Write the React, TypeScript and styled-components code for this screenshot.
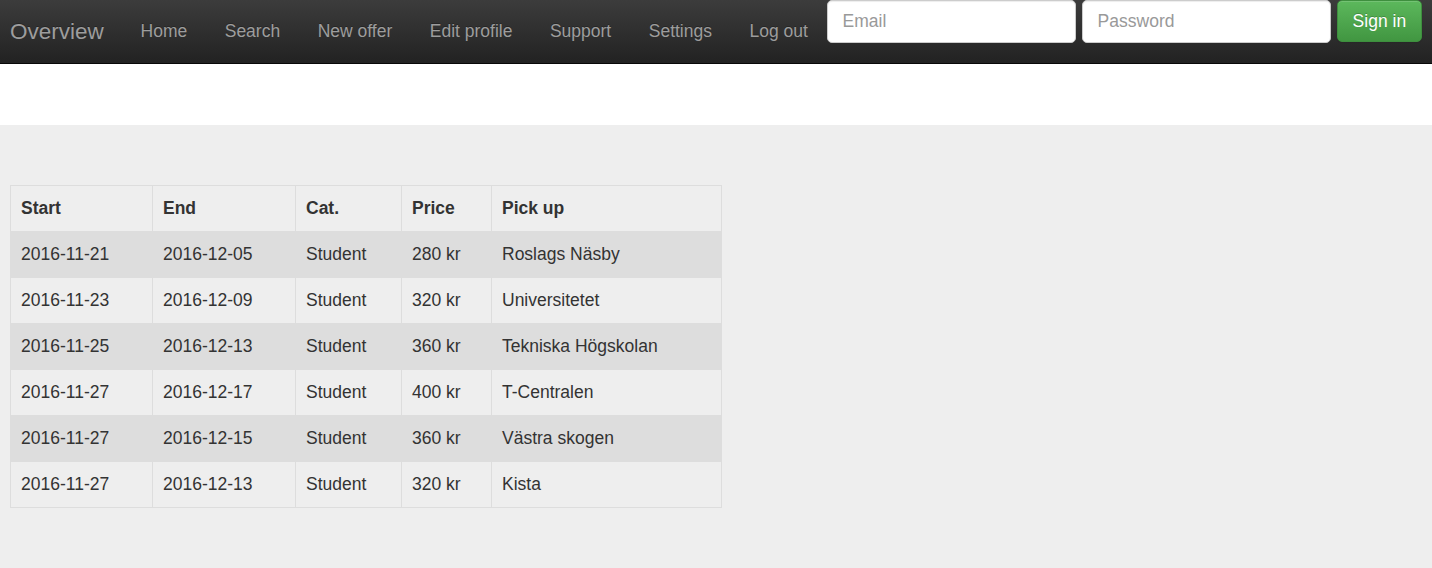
import React from 'react'
import styled, { createGlobalStyle } from 'styled-components'

const GlobalStyle = createGlobalStyle`
  * {
    box-sizing: border-box;
  }
  body {
    margin: 0;
    background: #fff;
    color: #333;
    font-family: 'Liberation Sans', Arial, Helvetica, sans-serif;
    font-size: 17.5px;
    line-height: 1.42857;
  }
`

const navItems = ['Home', 'Search', 'New offer', 'Edit profile', 'Support', 'Settings', 'Log out']

const rides = [
  { start: '2016-11-21', end: '2016-12-05', cat: 'Student', price: '280 kr', pickup: 'Roslags Näsby' },
  { start: '2016-11-23', end: '2016-12-09', cat: 'Student', price: '320 kr', pickup: 'Universitetet' },
  { start: '2016-11-25', end: '2016-12-13', cat: 'Student', price: '360 kr', pickup: 'Tekniska Högskolan' },
  { start: '2016-11-27', end: '2016-12-17', cat: 'Student', price: '400 kr', pickup: 'T-Centralen' },
  { start: '2016-11-27', end: '2016-12-15', cat: 'Student', price: '360 kr', pickup: 'Västra skogen' },
  { start: '2016-11-27', end: '2016-12-13', cat: 'Student', price: '320 kr', pickup: 'Kista' },
]

const columns = [
  { label: 'Start', width: 142 },
  { label: 'End', width: 143 },
  { label: 'Cat.', width: 106 },
  { label: 'Price', width: 90 },
  { label: 'Pick up', width: 230 },
]

const App: React.FC = () => {
  return (
    <>
      <GlobalStyle />
      <Navbar>
        <Brand href='#'>Overview</Brand>
        <NavList>
          {navItems.map((item) => (
            <NavLink key={item} href='#'>
              {item}
            </NavLink>
          ))}
        </NavList>
        <LoginForm onSubmit={(e) => e.preventDefault()}>
          <Input type='text' placeholder='Email' />
          <Input type='password' placeholder='Password' />
          <SignIn type='submit'>Sign in</SignIn>
        </LoginForm>
      </Navbar>
      <Spacer />
      <Jumbotron>
        <Table>
          <colgroup>
            {columns.map((c) => (
              <col key={c.label} style={{ width: c.width }} />
            ))}
          </colgroup>
          <thead>
            <tr>
              {columns.map((c) => (
                <Th key={c.label}>{c.label}</Th>
              ))}
            </tr>
          </thead>
          <tbody>
            {rides.map((r, i) => (
              <Row key={i} $striped={i % 2 === 0}>
                <Td>{r.start}</Td>
                <Td>{r.end}</Td>
                <Td>{r.cat}</Td>
                <Td>{r.price}</Td>
                <Td>{r.pickup}</Td>
              </Row>
            ))}
          </tbody>
        </Table>
      </Jumbotron>
    </>
  )
}

export default App

const Navbar = styled.nav`
  display: flex;
  align-items: flex-start;
  height: 64px;
  background: linear-gradient(to bottom, #3c3c3c 0, #222 100%);
  border-bottom: 1px solid #080808;
`

const Brand = styled.a`
  display: block;
  height: 63px;
  padding: 18.75px 18px 0 10px;
  font-size: 22.5px;
  line-height: 25px;
  color: #9d9d9d;
  text-decoration: none;
  text-shadow: 0 -1px 0 rgba(0, 0, 0, 0.25);
`

const NavList = styled.div`
  display: flex;
`

const NavLink = styled.a`
  display: block;
  padding: 18.75px 18.75px;
  line-height: 25px;
  color: #9d9d9d;
  text-decoration: none;
  text-shadow: 0 -1px 0 rgba(0, 0, 0, 0.25);
  white-space: nowrap;
`

const LoginForm = styled.form`
  display: flex;
  align-items: flex-start;
  gap: 6px;
  margin: 0;
`

const Input = styled.input`
  width: 249px;
  height: 43px;
  padding: 7.5px 15px;
  font-family: inherit;
  font-size: 17.5px;
  color: #555;
  background: #fff;
  border: 1px solid #ccc;
  border-radius: 5px;
  box-shadow: inset 0 1px 1px rgba(0, 0, 0, 0.075);
  outline: none;

  &::placeholder {
    color: #999;
  }
`

const SignIn = styled.button`
  height: 42px;
  padding: 7.5px 15px;
  font-family: inherit;
  font-size: 17.5px;
  line-height: 25px;
  color: #fff;
  background: linear-gradient(to bottom, #5cb85c 0, #419641 100%);
  border: 1px solid #3e8f3e;
  border-radius: 5px;
  text-shadow: 0 -1px 0 rgba(0, 0, 0, 0.2);
  box-shadow: inset 0 1px 0 rgba(255, 255, 255, 0.15), 0 1px 1px rgba(0, 0, 0, 0.075);
  cursor: pointer;
  white-space: nowrap;
`

const Spacer = styled.div`
  height: 61px;
`

const Jumbotron = styled.section`
  background: #eee;
  padding: 60px 10px 61px;
  min-height: 443px;
`

const Table = styled.table`
  width: 711px;
  table-layout: fixed;
  border-collapse: collapse;
  border: 1px solid #ddd;
`

const Th = styled.th`
  padding: 10px;
  text-align: left;
  font-weight: bold;
  line-height: 25px;
  border: 1px solid #ddd;
`

const Row = styled.tr<{ $striped: boolean }>`
  background: ${(p) => (p.$striped ? '#ddd' : '#eee')};
`

const Td = styled.td`
  padding: 10px;
  line-height: 25px;
  border: 1px solid #ddd;
  white-space: nowrap;
`
